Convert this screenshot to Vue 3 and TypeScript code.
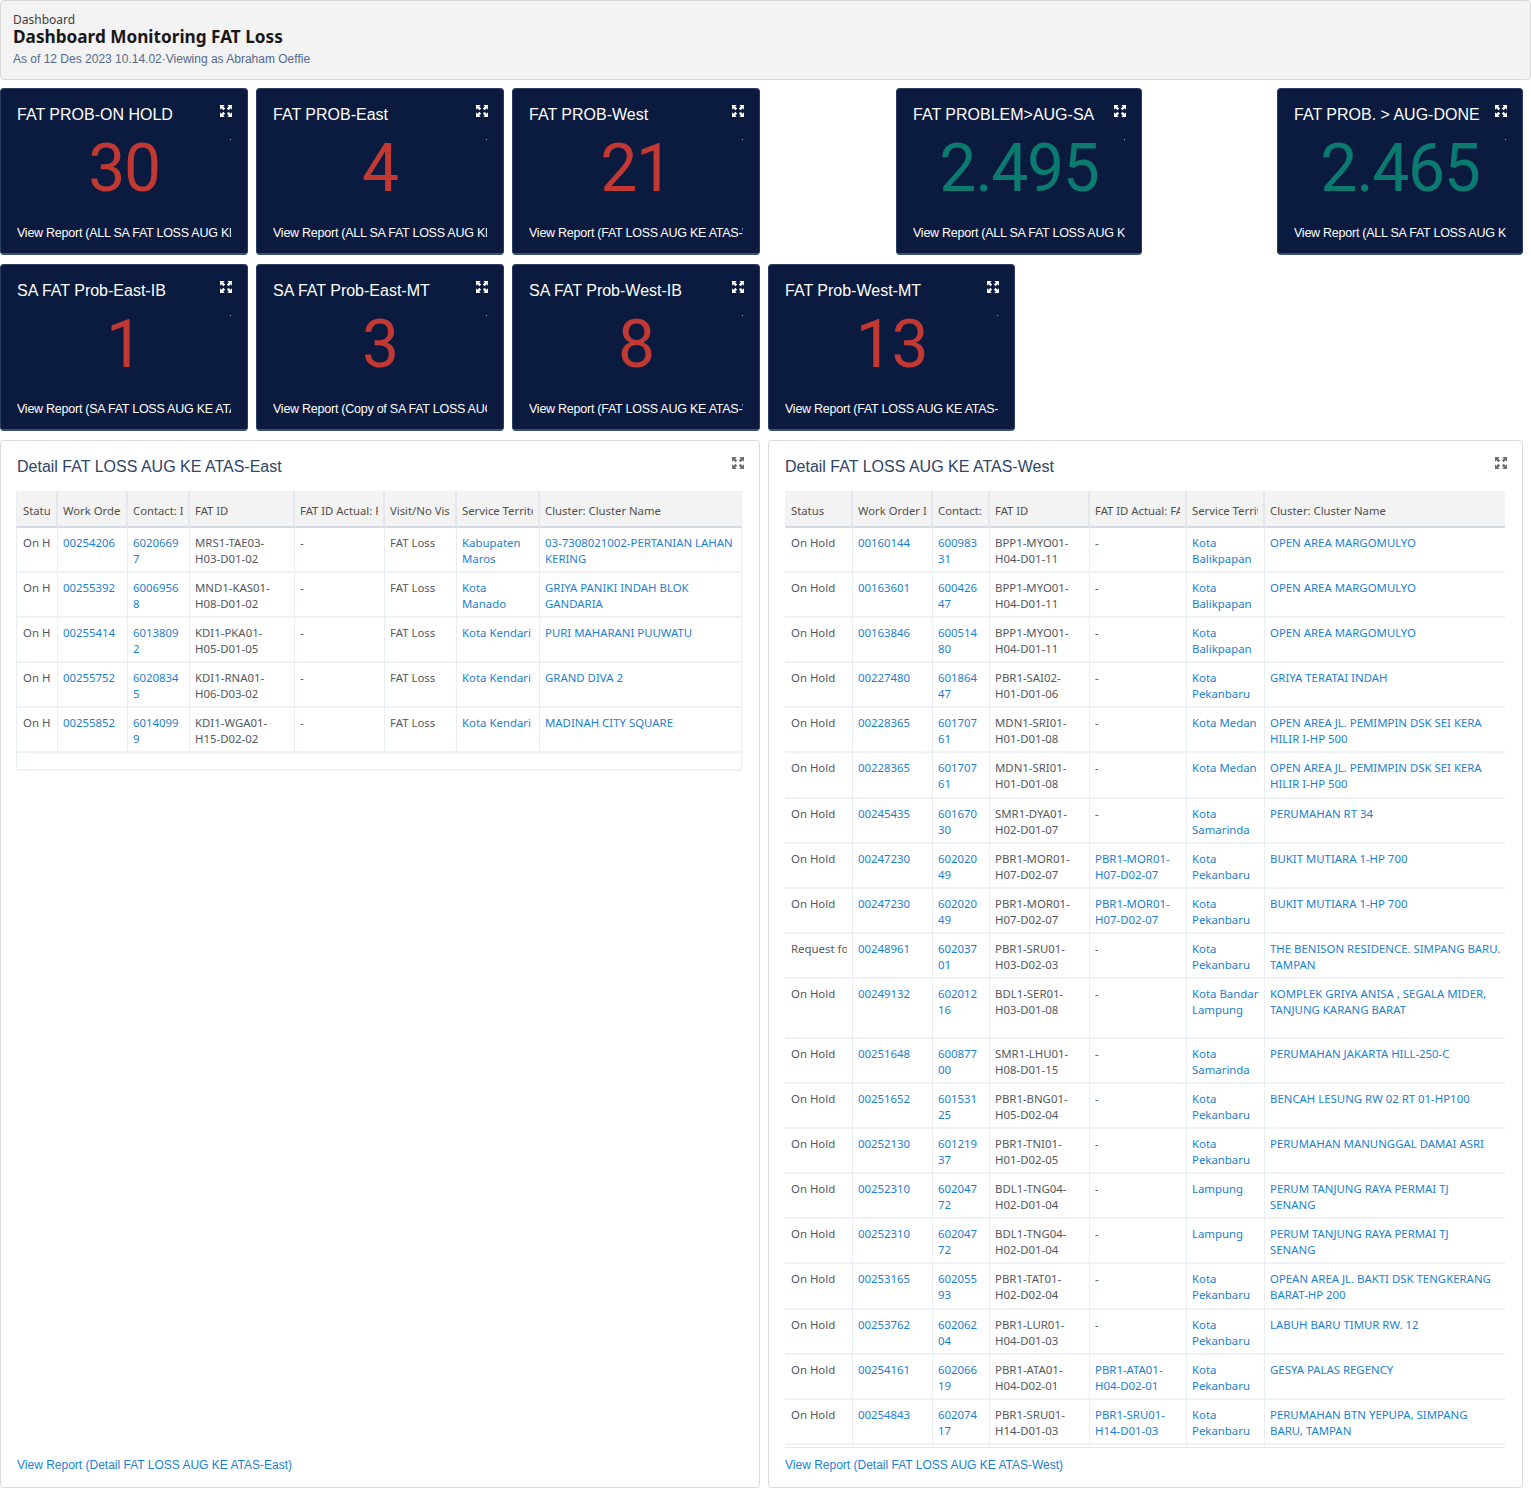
<script setup lang="ts">
interface Kpi {
  title: string;
  value: string;
  link: string;
  ok?: boolean;
}

const rowOne: Kpi[] = [
  { title: 'FAT PROB-ON HOLD', value: '30', link: 'View Report (ALL SA FAT LOSS AUG KE ATAS)' },
  { title: 'FAT PROB-East', value: '4', link: 'View Report (ALL SA FAT LOSS AUG KE ATAS)' },
  { title: 'FAT PROB-West', value: '21', link: 'View Report (FAT LOSS AUG KE ATAS-West)' },
  { title: 'FAT PROBLEM>AUG-SA', value: '2.495', link: 'View Report (ALL SA FAT LOSS AUG KE ATAS)', ok: true },
  { title: 'FAT PROB. > AUG-DONE', value: '2.465', link: 'View Report (ALL SA FAT LOSS AUG KE ATAS)', ok: true },
];

const rowTwo: Kpi[] = [
  { title: 'SA FAT Prob-East-IB', value: '1', link: 'View Report (SA FAT LOSS AUG KE ATAS-East)' },
  { title: 'SA FAT Prob-East-MT', value: '3', link: 'View Report (Copy of SA FAT LOSS AUG KE)' },
  { title: 'SA FAT Prob-West-IB', value: '8', link: 'View Report (FAT LOSS AUG KE ATAS-West)' },
  { title: 'FAT Prob-West-MT', value: '13', link: 'View Report (FAT LOSS AUG KE ATAS-West)' },
];

const eastCols = [42, 70, 62, 105, 90, 72, 83, 202];
const eastHead = ['Status', 'Work Order', 'Contact: ID', 'FAT ID', 'FAT ID Actual: FAT', 'Visit/No Visit', 'Service Territory', 'Cluster: Cluster Name'];
const eastRows = [
  ['On Hold', '00254206', '6020669\n7', 'MRS1-TAE03-\nH03-D01-02', '-', 'FAT Loss', 'Kabupaten\nMaros', '03-7308021002-PERTANIAN LAHAN\nKERING'],
  ['On Hold', '00255392', '6006956\n8', 'MND1-KAS01-\nH08-D01-02', '-', 'FAT Loss', 'Kota\nManado', 'GRIYA PANIKI INDAH BLOK\nGANDARIA'],
  ['On Hold', '00255414', '6013809\n2', 'KDI1-PKA01-\nH05-D01-05', '-', 'FAT Loss', 'Kota Kendari', 'PURI MAHARANI PUUWATU'],
  ['On Hold', '00255752', '6020834\n5', 'KDI1-RNA01-\nH06-D03-02', '-', 'FAT Loss', 'Kota Kendari', 'GRAND DIVA 2'],
  ['On Hold', '00255852', '6014099\n9', 'KDI1-WGA01-\nH15-D02-02', '-', 'FAT Loss', 'Kota Kendari', 'MADINAH CITY SQUARE'],
];
// link columns per table, by index
const eastLinks = [1, 2, 6, 7];

const westCols = [68, 80, 57, 100, 97, 78, 240];
const westHead = ['Status', 'Work Order ID', 'Contact: ID', 'FAT ID', 'FAT ID Actual: FAT', 'Service Territory', 'Cluster: Cluster Name'];
const westRows = [
  ['On Hold', '00160144', '600983\n31', 'BPP1-MYO01-\nH04-D01-11', '-', 'Kota\nBalikpapan', 'OPEN AREA MARGOMULYO'],
  ['On Hold', '00163601', '600426\n47', 'BPP1-MYO01-\nH04-D01-11', '-', 'Kota\nBalikpapan', 'OPEN AREA MARGOMULYO'],
  ['On Hold', '00163846', '600514\n80', 'BPP1-MYO01-\nH04-D01-11', '-', 'Kota\nBalikpapan', 'OPEN AREA MARGOMULYO'],
  ['On Hold', '00227480', '601864\n47', 'PBR1-SAI02-\nH01-D01-06', '-', 'Kota\nPekanbaru', 'GRIYA TERATAI INDAH'],
  ['On Hold', '00228365', '601707\n61', 'MDN1-SRI01-\nH01-D01-08', '-', 'Kota Medan', 'OPEN AREA JL. PEMIMPIN DSK SEI KERA\nHILIR I-HP 500'],
  ['On Hold', '00228365', '601707\n61', 'MDN1-SRI01-\nH01-D01-08', '-', 'Kota Medan', 'OPEN AREA JL. PEMIMPIN DSK SEI KERA\nHILIR I-HP 500'],
  ['On Hold', '00245435', '601670\n30', 'SMR1-DYA01-\nH02-D01-07', '-', 'Kota\nSamarinda', 'PERUMAHAN RT 34'],
  ['On Hold', '00247230', '602020\n49', 'PBR1-MOR01-\nH07-D02-07', 'PBR1-MOR01-\nH07-D02-07', 'Kota\nPekanbaru', 'BUKIT MUTIARA 1-HP 700'],
  ['On Hold', '00247230', '602020\n49', 'PBR1-MOR01-\nH07-D02-07', 'PBR1-MOR01-\nH07-D02-07', 'Kota\nPekanbaru', 'BUKIT MUTIARA 1-HP 700'],
  ['Request for', '00248961', '602037\n01', 'PBR1-SRU01-\nH03-D02-03', '-', 'Kota\nPekanbaru', 'THE BENISON RESIDENCE. SIMPANG BARU.\nTAMPAN'],
  ['On Hold', '00249132', '602012\n16', 'BDL1-SER01-\nH03-D01-08', '-', 'Kota Bandar\nLampung', 'KOMPLEK GRIYA ANISA , SEGALA MIDER,\nTANJUNG KARANG BARAT'],
  ['On Hold', '00251648', '600877\n00', 'SMR1-LHU01-\nH08-D01-15', '-', 'Kota\nSamarinda', 'PERUMAHAN JAKARTA HILL-250-C'],
  ['On Hold', '00251652', '601531\n25', 'PBR1-BNG01-\nH05-D02-04', '-', 'Kota\nPekanbaru', 'BENCAH LESUNG RW 02 RT 01-HP100'],
  ['On Hold', '00252130', '601219\n37', 'PBR1-TNI01-\nH01-D02-05', '-', 'Kota\nPekanbaru', 'PERUMAHAN MANUNGGAL DAMAI ASRI'],
  ['On Hold', '00252310', '602047\n72', 'BDL1-TNG04-\nH02-D01-04', '-', 'Lampung', 'PERUM TANJUNG RAYA PERMAI TJ\nSENANG'],
  ['On Hold', '00252310', '602047\n72', 'BDL1-TNG04-\nH02-D01-04', '-', 'Lampung', 'PERUM TANJUNG RAYA PERMAI TJ\nSENANG'],
  ['On Hold', '00253165', '602055\n93', 'PBR1-TAT01-\nH02-D02-04', '-', 'Kota\nPekanbaru', 'OPEAN AREA JL. BAKTI DSK TENGKERANG\nBARAT-HP 200'],
  ['On Hold', '00253762', '602062\n04', 'PBR1-LUR01-\nH04-D01-03', '-', 'Kota\nPekanbaru', 'LABUH BARU TIMUR RW. 12'],
  ['On Hold', '00254161', '602066\n19', 'PBR1-ATA01-\nH04-D02-01', 'PBR1-ATA01-\nH04-D02-01', 'Kota\nPekanbaru', 'GESYA PALAS REGENCY'],
  ['On Hold', '00254843', '602074\n17', 'PBR1-SRU01-\nH14-D01-03', 'PBR1-SRU01-\nH14-D01-03', 'Kota\nPekanbaru', 'PERUMAHAN BTN YEPUPA, SIMPANG\nBARU, TAMPAN'],
];
const westLinks = [1, 2, 5, 6];

function isLink(links: number[], idx: number, text: string) {
  if (links.includes(idx)) return true;
  // FAT ID Actual is a link when it holds a record
  return idx === 4 && text !== '-';
}

const expandPath = 'M0 0h6.2L4.3 1.9l2.6 2.6-2.4 2.4-2.6-2.6L0 6.2zM16 0v6.2l-1.9-1.9-2.6 2.6-2.4-2.4 2.6-2.6L9.8 0zM0 16V9.8l1.9 1.9 2.6-2.6 2.4 2.4-2.6 2.6L6.2 16zM16 16H9.8l1.9-1.9-2.6-2.6 2.4-2.4 2.6 2.6L16 9.8z';
</script>

<template>
  <div class="page">
    <header class="top">
      <div class="crumb">Dashboard</div>
      <h1>Dashboard Monitoring FAT Loss</h1>
      <div class="asof">As of 12 Des 2023 10.14.02·Viewing as Abraham Oeffie</div>
    </header>

    <section class="kpis row-one">
      <article v-for="k in rowOne" :key="k.title" class="kpi">
        <div class="kpi-title">{{ k.title }}</div>
        <svg class="expand" viewBox="0 0 16 16"><path :d="expandPath" /></svg>
        <span class="dot"></span>
        <div class="kpi-value" :class="{ ok: k.ok }">{{ k.value }}</div>
        <div class="kpi-link">{{ k.link }}</div>
      </article>
    </section>

    <section class="kpis row-two">
      <article v-for="k in rowTwo" :key="k.title" class="kpi">
        <div class="kpi-title">{{ k.title }}</div>
        <svg class="expand" viewBox="0 0 16 16"><path :d="expandPath" /></svg>
        <span class="dot"></span>
        <div class="kpi-value">{{ k.value }}</div>
        <div class="kpi-link">{{ k.link }}</div>
      </article>
    </section>

    <section class="details">
      <article class="panel east">
        <h2>Detail FAT LOSS AUG KE ATAS-East</h2>
        <svg class="expand grey" viewBox="0 0 16 16"><path :d="expandPath" /></svg>
        <div class="table-wrap">
          <table>
            <colgroup><col v-for="(w, i) in eastCols" :key="i" :style="{ width: w + 'px' }" /></colgroup>
            <thead>
              <tr><th v-for="h in eastHead" :key="h"><div class="clip">{{ h }}</div></th></tr>
            </thead>
            <tbody>
              <tr v-for="(r, ri) in eastRows" :key="ri">
                <td v-for="(c, ci) in r" :key="ci" :class="{ link: isLink(eastLinks, ci, c) }"><div class="clip">{{ c }}</div></td>
              </tr>
              <tr class="blank"><td colspan="8"></td></tr>
            </tbody>
          </table>
        </div>
        <a class="report">View Report (Detail FAT LOSS AUG KE ATAS-East)</a>
      </article>

      <article class="panel west">
        <h2>Detail FAT LOSS AUG KE ATAS-West</h2>
        <svg class="expand grey" viewBox="0 0 16 16"><path :d="expandPath" /></svg>
        <div class="table-wrap">
          <table>
            <colgroup><col v-for="(w, i) in westCols" :key="i" :style="{ width: w + 'px' }" /></colgroup>
            <thead>
              <tr><th v-for="h in westHead" :key="h"><div class="clip">{{ h }}</div></th></tr>
            </thead>
            <tbody>
              <tr v-for="(r, ri) in westRows" :key="ri" :class="{ tall: ri === 10 }">
                <td v-for="(c, ci) in r" :key="ci" :class="{ link: isLink(westLinks, ci, c) }"><div class="clip">{{ c }}</div></td>
              </tr>
              <tr class="rest"><td v-for="w in westCols" :key="w"></td></tr>
            </tbody>
          </table>
        </div>
        <a class="report">View Report (Detail FAT LOSS AUG KE ATAS-West)</a>
      </article>
    </section>
  </div>
</template>

<style>
html, body { background: #fff; }
</style>

<style scoped>
.page {
  width: 1531px;
  height: 1498px;
  overflow: hidden;
  font-family: "Noto Sans", "Liberation Sans", sans-serif;
  color: #3e3e3c;
}
.top {
  box-sizing: border-box;
  height: 80px;
  padding: 12px 12px 0;
  background: #f3f3f3;
  border: 1px solid #d8d8d8;
  border-radius: 4px;
}
.crumb { font-size: 12px; line-height: 14px; color: #3e3e3c; }
h1 {
  margin: 0;
  font-size: 17.2px;
  line-height: 20px;
  font-weight: 700;
  color: #181818;
}
.asof {
  margin-top: 4px;
  font-family: "Liberation Sans", Arial, sans-serif;
  font-size: 12px;
  line-height: 16px;
  color: #54698d;
}
.kpis {
  display: flex;
  align-items: flex-start;
  gap: 8px;
  height: 167px;
}
.row-one { margin-top: 8px; }
.row-two { margin-top: 9px; }
.row-one .kpi:nth-child(4) { margin-left: 128px; width: 246px; }
.row-one .kpi:nth-child(5) { margin-left: 127px; width: 246px; }
.row-two .kpi:nth-child(4) { width: 247px; }
.kpi {
  position: relative;
  box-sizing: border-box;
  width: 248px;
  height: 167px;
  padding: 16px 16px 0;
  background: #0a1b3f;
  border: 1px solid #2c3c60;
  border-bottom: 2px solid #3d4d6e;
  border-radius: 4px;
  color: #fff;
  font-family: "Liberation Sans", Arial, sans-serif;
}
.kpi-title {
  font-size: 16px;
  line-height: 20px;
  white-space: nowrap;
}
.expand {
  position: absolute;
  top: 16px;
  right: 15px;
  width: 12px;
  height: 12px;
  fill: #fff;
}
.expand.grey { fill: #706e6b; }
.dot {
  position: absolute;
  top: 50px;
  right: 16px;
  width: 1px;
  height: 1px;
  background: #aab;
}
.kpi-value {
  margin-top: 10px;
  text-align: center;
  font-family: Roboto, "Liberation Sans", sans-serif;
  font-size: 66px;
  line-height: 68px;
  letter-spacing: -1.3px;
  color: #c23934;
}
.kpi-value.ok { color: #0b7a6f; }
.kpi-link {
  margin-top: 22px;
  font-size: 12.5px;
  line-height: 16px;
  letter-spacing: -0.25px;
  white-space: nowrap;
  overflow: hidden;
}
.details {
  display: flex;
  gap: 8px;
  margin-top: 9px;
}
.panel {
  position: relative;
  box-sizing: border-box;
  height: 1048px;
  padding: 17px 16px 0 15px;
  background: #fff;
  border: 1px solid #dddbda;
  border-radius: 4px;
}
.east { width: 760px; }
.west { width: 755px; }
h2 {
  margin: 0;
  height: 18px;
  padding-left: 1px;
  font-family: "Liberation Sans", Arial, sans-serif;
  font-size: 16px;
  line-height: 18px;
  font-weight: 400;
  color: #2e4468;
}
.table-wrap {
  margin-top: 15px;
  height: 956px;
  overflow: hidden;
}
.west .table-wrap {
  width: 720px;
  margin-left: 1px;
  border-bottom: 1px solid #e4e8ee;
}
.east .table-wrap { width: 726px; }
table {
  table-layout: fixed;
  border-collapse: separate;
  border-spacing: 0;
  width: 100%;
  font-size: 11.4px;
  line-height: 16px;
}
th {
  box-sizing: border-box;
  height: 37px;
  padding: 5px 5px 0;
  background: #f3f3f3;
  border-right: 2px solid #e4e8ee;
  border-bottom: 2px solid #d4dbe4;
  font-size: 11.3px;
  font-weight: 400;
  text-align: left;
  color: #514f4d;
}
th:first-child, td:first-child { padding-left: 6px; }
th:last-child, td:last-child { border-right: 0; }
td {
  box-sizing: border-box;
  height: 45.1px;
  padding: 7px 5px 0;
  vertical-align: top;
  border-right: 1px solid #e9edf4;
  border-bottom: 2px solid #eef1f6;
  color: #54585c;
}
.east th:first-child, .east td:first-child { border-left: 1px solid #e9edf4; padding-right: 6px; }
.east td:first-child { padding-right: 7px; }
.east th:last-child, .east td:last-child { border-right: 1px solid #e9edf4; }
tr.tall td { height: 60px; }
tr.blank td { height: 18px; padding: 0; border-bottom: 2px solid #eef1f6; }
tr.rest td { height: 10px; padding: 0; }
td.link { color: #1b7fd1; }
.clip {
  overflow: hidden;
  white-space: pre;
}
.report {
  position: absolute;
  left: 16px;
  bottom: 14px;
  font-family: "Liberation Sans", Arial, sans-serif;
  font-size: 12px;
  line-height: 16px;
  color: #1b7fd1;
}
</style>
